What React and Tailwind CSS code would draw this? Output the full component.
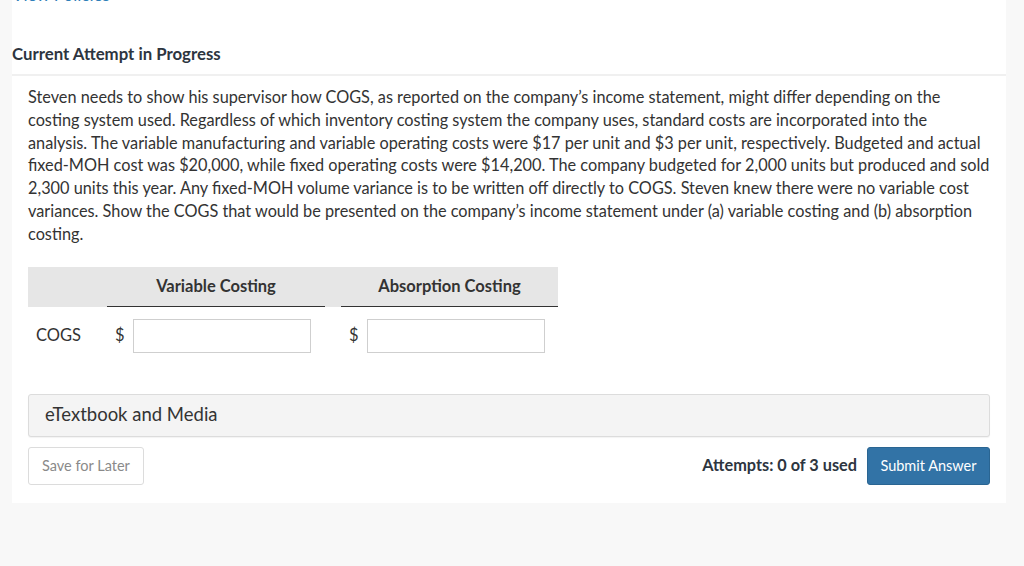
const PROBLEM_LINES = [
    'Steven needs to show his supervisor how COGS, as reported on the company\u2019s income statement, might differ depending on the',
    'costing system used. Regardless of which inventory costing system the company uses, standard costs are incorporated into the',
    'analysis. The variable manufacturing and variable operating costs were $17 per unit and $3 per unit, respectively. Budgeted and actual',
    'fixed-MOH cost was $20,000, while fixed operating costs were $14,200. The company budgeted for 2,000 units but produced and sold',
    '2,300 units this year. Any fixed-MOH volume variance is to be written off directly to COGS. Steven knew there were no variable cost',
    'variances. Show the COGS that would be presented on the company\u2019s income statement under (a) variable costing and (b) absorption',
    'costing.',
];

function MoneyInput() {
    return (
        <div className="flex items-center">
            <span className="w-[26px] pl-[8px] text-[16.5px] text-[#333]">$</span>
            <input type="text" className="w-[178px] h-[34px] border border-[#cfcfcf] bg-white outline-none px-2" />
        </div>
    );
}

export default function App() {
    return (
        <div className="w-[1024px] h-[566px] overflow-hidden bg-[#f8f8f8] font-['Lato','Open_Sans',sans-serif] text-[#333]">
            <div className="ml-[12px] w-[994px] bg-white -mt-[14px]">
                <div className="h-[18px] flex items-end">
                    <a className="text-[17px] leading-[18px] text-[#2f80b9] cursor-pointer">View Policies</a>
                </div>
                <div className="h-[70px] flex items-end pb-[8px]">
                    <h2 className="text-[16.8px] leading-[24px] font-bold text-[#2d3540]">Current Attempt in Progress</h2>
                </div>
                <div className="h-[2px] bg-[#f0f0f0]" />

                <div className="pl-[16px] pr-[16px] pt-[10px] pb-[18px]">
                    <p className="text-[16.3px] leading-[22.8px] text-[#333] whitespace-nowrap">
                        {PROBLEM_LINES.map((line, i) => (
                            <span key={i} className="block">{line}</span>
                        ))}
                    </p>

                    <div className="mt-[21px] w-[530px]">
                        <div className="flex h-[40px] bg-[#e6e6e6]">
                            <div className="w-[79px]" />
                            <div className="w-[218px] border-b border-[#333] flex items-center justify-center text-[16.5px] font-bold text-[#333]">
                                Variable Costing
                            </div>
                            <div className="w-[16px]" />
                            <div className="w-[217px] border-b border-[#333] flex items-center justify-center text-[16.5px] font-bold text-[#333]">
                                Absorption Costing
                            </div>
                        </div>
                        <div className="flex items-center h-[56px] pt-[2px]">
                            <div className="w-[79px] pl-[8px] text-[16.5px] text-[#333]">COGS</div>
                            <MoneyInput />
                            <div className="w-[30px]" />
                            <MoneyInput />
                        </div>
                    </div>

                    <div className="mt-[31px] h-[43px] bg-[#f4f4f4] border border-[#dcdcdc] rounded-[3px] flex items-center px-[16px] text-[18.5px] text-[#333] shadow-[0_1px_1px_rgba(0,0,0,0.05)]">
                        eTextbook and Media
                    </div>

                    <div className="mt-[10px] flex items-center justify-between">
                        <button className="h-[38px] px-[13px] border border-[#dcdcdc] rounded-[3px] bg-white text-[14.5px] text-[#8a8a8a]">
                            Save for Later
                        </button>
                        <div className="flex items-center gap-[10px]">
                            <span className="text-[16.3px] font-bold text-[#2d3540]">Attempts: 0 of 3 used</span>
                            <button className="h-[38px] w-[123px] rounded-[3px] bg-[#3273a6] text-[14.5px] text-white border border-[#2a6592]">
                                Submit Answer
                            </button>
                        </div>
                    </div>
                </div>
            </div>
        </div>
    );
}
